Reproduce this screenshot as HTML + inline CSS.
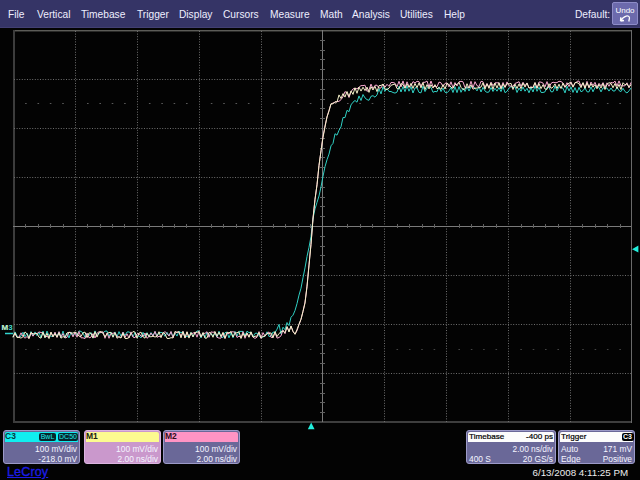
<!DOCTYPE html>
<html><head><meta charset="utf-8">
<style>
html,body{margin:0;padding:0;width:640px;height:480px;overflow:hidden;background:#030303;}
body{position:relative;font-family:"Liberation Sans",sans-serif;}
#menu{position:absolute;left:0;top:0;width:640px;height:28px;background:#353466;}
.mi{position:absolute;top:9px;font-size:10.2px;color:#eeeeff;line-height:12px;white-space:nowrap;}
#undo{position:absolute;left:612px;top:2px;width:26px;height:23px;box-sizing:border-box;background:#6c6aac;border:1px solid #8e8cc8;border-radius:2px;}
#undo .t{position:absolute;left:0;width:24px;text-align:center;top:3.5px;font-size:8px;line-height:8px;color:#fff;}
.pn{position:absolute;top:430px;height:34px;box-sizing:border-box;border-radius:3px;background:#6a6898;border:1px solid #9c9ac8;overflow:hidden;}
.hd{position:absolute;left:1px;right:1px;top:1px;height:10px;border-radius:2px 2px 0 0;}
.tx{position:absolute;font-size:8.4px;line-height:10px;color:#f4f4ff;white-space:nowrap;}
.r{right:2px;text-align:right;}
.l{left:2px;}
.r1{top:12.5px}
.r2{top:22.5px}
.h{top:1px;font-size:8.1px;-webkit-text-stroke:0.2px currentColor;}
.bd{position:absolute;top:2px;height:8px;background:#06262c;border-radius:2px;color:#20e8ea;font-size:7px;line-height:8px;text-align:center;}
</style></head><body>
<div id="menu"><div style="position:absolute;left:0;top:27px;width:640px;height:1px;background:#423f72"></div>
<div class="mi" style="left:8px">File</div>
<div class="mi" style="left:37px">Vertical</div>
<div class="mi" style="left:81px">Timebase</div>
<div class="mi" style="left:137px">Trigger</div>
<div class="mi" style="left:179px">Display</div>
<div class="mi" style="left:223px">Cursors</div>
<div class="mi" style="left:270px">Measure</div>
<div class="mi" style="left:320px">Math</div>
<div class="mi" style="left:352px">Analysis</div>
<div class="mi" style="left:400px">Utilities</div>
<div class="mi" style="left:444px">Help</div>
<div class="mi" style="left:575px">Default:</div>
<div id="undo"><div class="t">Undo</div>
<svg width="26" height="24" style="position:absolute;left:-1px;top:-1px"><path d="M8.5 19 L8.8 15.3 M8.5 19 L12 18.5 M9 18.5 C 11.5 13.5, 17.5 12.5, 17.5 16 L16.8 19.5" fill="none" stroke="#fff" stroke-width="1.3"/></svg>
</div>
</div>
<svg width="640" height="452" viewBox="0 28 640 452" style="position:absolute;left:0;top:28px">
<rect x="13" y="30" width="619" height="1" fill="#5c5c58"/>
<rect x="13" y="31" width="619" height="1" fill="#2a2a28"/>
<rect x="13" y="421" width="619" height="2" fill="#3e3e3e"/>
<rect x="13" y="30" width="2" height="393" fill="#3c3c3c"/>
<rect x="631" y="30" width="1" height="393" fill="#6a6a6a"/>
<line x1="75.5" y1="31" x2="75.5" y2="422" stroke="#6e6e6e" stroke-dasharray="1 1.6"/>
<line x1="137.5" y1="31" x2="137.5" y2="422" stroke="#6e6e6e" stroke-dasharray="1 1.6"/>
<line x1="199.5" y1="31" x2="199.5" y2="422" stroke="#6e6e6e" stroke-dasharray="1 1.6"/>
<line x1="261.5" y1="31" x2="261.5" y2="422" stroke="#6e6e6e" stroke-dasharray="1 1.6"/>
<line x1="384.5" y1="31" x2="384.5" y2="422" stroke="#6e6e6e" stroke-dasharray="1 1.6"/>
<line x1="446.5" y1="31" x2="446.5" y2="422" stroke="#6e6e6e" stroke-dasharray="1 1.6"/>
<line x1="508.5" y1="31" x2="508.5" y2="422" stroke="#6e6e6e" stroke-dasharray="1 1.6"/>
<line x1="570.5" y1="31" x2="570.5" y2="422" stroke="#6e6e6e" stroke-dasharray="1 1.6"/>
<line x1="14" y1="79.5" x2="631" y2="79.5" stroke="#6e6e6e" stroke-dasharray="1 1.6"/>
<line x1="14" y1="128.5" x2="631" y2="128.5" stroke="#6e6e6e" stroke-dasharray="1 1.6"/>
<line x1="14" y1="177.5" x2="631" y2="177.5" stroke="#6e6e6e" stroke-dasharray="1 1.6"/>
<line x1="14" y1="275.5" x2="631" y2="275.5" stroke="#6e6e6e" stroke-dasharray="1 1.6"/>
<line x1="14" y1="324.5" x2="631" y2="324.5" stroke="#6e6e6e" stroke-dasharray="1 1.6"/>
<line x1="14" y1="373.5" x2="631" y2="373.5" stroke="#6e6e6e" stroke-dasharray="1 1.6"/>
<rect x="25.1" y="103" width="1.6" height="1" fill="#5a5a5a"/>
<rect x="37.5" y="103" width="1.6" height="1" fill="#5a5a5a"/>
<rect x="49.8" y="103" width="1.6" height="1" fill="#5a5a5a"/>
<rect x="62.2" y="103" width="1.6" height="1" fill="#5a5a5a"/>
<rect x="87.0" y="103" width="1.6" height="1" fill="#5a5a5a"/>
<rect x="99.4" y="103" width="1.6" height="1" fill="#5a5a5a"/>
<rect x="111.7" y="103" width="1.6" height="1" fill="#5a5a5a"/>
<rect x="124.1" y="103" width="1.6" height="1" fill="#5a5a5a"/>
<rect x="148.9" y="103" width="1.6" height="1" fill="#5a5a5a"/>
<rect x="161.3" y="103" width="1.6" height="1" fill="#5a5a5a"/>
<rect x="173.6" y="103" width="1.6" height="1" fill="#5a5a5a"/>
<rect x="186.0" y="103" width="1.6" height="1" fill="#5a5a5a"/>
<rect x="210.8" y="103" width="1.6" height="1" fill="#5a5a5a"/>
<rect x="223.2" y="103" width="1.6" height="1" fill="#5a5a5a"/>
<rect x="235.5" y="103" width="1.6" height="1" fill="#5a5a5a"/>
<rect x="247.9" y="103" width="1.6" height="1" fill="#5a5a5a"/>
<rect x="272.7" y="103" width="1.6" height="1" fill="#5a5a5a"/>
<rect x="285.1" y="103" width="1.6" height="1" fill="#5a5a5a"/>
<rect x="297.4" y="103" width="1.6" height="1" fill="#5a5a5a"/>
<rect x="309.8" y="103" width="1.6" height="1" fill="#5a5a5a"/>
<rect x="334.6" y="103" width="1.6" height="1" fill="#5a5a5a"/>
<rect x="347.0" y="103" width="1.6" height="1" fill="#5a5a5a"/>
<rect x="359.3" y="103" width="1.6" height="1" fill="#5a5a5a"/>
<rect x="371.7" y="103" width="1.6" height="1" fill="#5a5a5a"/>
<rect x="396.5" y="103" width="1.6" height="1" fill="#5a5a5a"/>
<rect x="408.9" y="103" width="1.6" height="1" fill="#5a5a5a"/>
<rect x="421.2" y="103" width="1.6" height="1" fill="#5a5a5a"/>
<rect x="433.6" y="103" width="1.6" height="1" fill="#5a5a5a"/>
<rect x="458.4" y="103" width="1.6" height="1" fill="#5a5a5a"/>
<rect x="470.8" y="103" width="1.6" height="1" fill="#5a5a5a"/>
<rect x="483.1" y="103" width="1.6" height="1" fill="#5a5a5a"/>
<rect x="495.5" y="103" width="1.6" height="1" fill="#5a5a5a"/>
<rect x="520.3" y="103" width="1.6" height="1" fill="#5a5a5a"/>
<rect x="532.7" y="103" width="1.6" height="1" fill="#5a5a5a"/>
<rect x="545.0" y="103" width="1.6" height="1" fill="#5a5a5a"/>
<rect x="557.4" y="103" width="1.6" height="1" fill="#5a5a5a"/>
<rect x="582.2" y="103" width="1.6" height="1" fill="#5a5a5a"/>
<rect x="594.6" y="103" width="1.6" height="1" fill="#5a5a5a"/>
<rect x="606.9" y="103" width="1.6" height="1" fill="#5a5a5a"/>
<rect x="619.3" y="103" width="1.6" height="1" fill="#5a5a5a"/>
<rect x="25.1" y="349" width="1.6" height="1" fill="#444444"/>
<rect x="37.5" y="349" width="1.6" height="1" fill="#444444"/>
<rect x="49.8" y="349" width="1.6" height="1" fill="#444444"/>
<rect x="62.2" y="349" width="1.6" height="1" fill="#444444"/>
<rect x="87.0" y="349" width="1.6" height="1" fill="#444444"/>
<rect x="99.4" y="349" width="1.6" height="1" fill="#444444"/>
<rect x="111.7" y="349" width="1.6" height="1" fill="#444444"/>
<rect x="124.1" y="349" width="1.6" height="1" fill="#444444"/>
<rect x="148.9" y="349" width="1.6" height="1" fill="#444444"/>
<rect x="161.3" y="349" width="1.6" height="1" fill="#444444"/>
<rect x="173.6" y="349" width="1.6" height="1" fill="#444444"/>
<rect x="186.0" y="349" width="1.6" height="1" fill="#444444"/>
<rect x="210.8" y="349" width="1.6" height="1" fill="#444444"/>
<rect x="223.2" y="349" width="1.6" height="1" fill="#444444"/>
<rect x="235.5" y="349" width="1.6" height="1" fill="#444444"/>
<rect x="247.9" y="349" width="1.6" height="1" fill="#444444"/>
<rect x="272.7" y="349" width="1.6" height="1" fill="#444444"/>
<rect x="285.1" y="349" width="1.6" height="1" fill="#444444"/>
<rect x="297.4" y="349" width="1.6" height="1" fill="#444444"/>
<rect x="309.8" y="349" width="1.6" height="1" fill="#444444"/>
<rect x="334.6" y="349" width="1.6" height="1" fill="#444444"/>
<rect x="347.0" y="349" width="1.6" height="1" fill="#444444"/>
<rect x="359.3" y="349" width="1.6" height="1" fill="#444444"/>
<rect x="371.7" y="349" width="1.6" height="1" fill="#444444"/>
<rect x="396.5" y="349" width="1.6" height="1" fill="#444444"/>
<rect x="408.9" y="349" width="1.6" height="1" fill="#444444"/>
<rect x="421.2" y="349" width="1.6" height="1" fill="#444444"/>
<rect x="433.6" y="349" width="1.6" height="1" fill="#444444"/>
<rect x="458.4" y="349" width="1.6" height="1" fill="#444444"/>
<rect x="470.8" y="349" width="1.6" height="1" fill="#444444"/>
<rect x="483.1" y="349" width="1.6" height="1" fill="#444444"/>
<rect x="495.5" y="349" width="1.6" height="1" fill="#444444"/>
<rect x="520.3" y="349" width="1.6" height="1" fill="#444444"/>
<rect x="532.7" y="349" width="1.6" height="1" fill="#444444"/>
<rect x="545.0" y="349" width="1.6" height="1" fill="#444444"/>
<rect x="557.4" y="349" width="1.6" height="1" fill="#444444"/>
<rect x="582.2" y="349" width="1.6" height="1" fill="#444444"/>
<rect x="594.6" y="349" width="1.6" height="1" fill="#444444"/>
<rect x="606.9" y="349" width="1.6" height="1" fill="#444444"/>
<rect x="619.3" y="349" width="1.6" height="1" fill="#444444"/>
<line x1="322.5" y1="30" x2="322.5" y2="422" stroke="#7a7a7a"/>
<line x1="13" y1="226.5" x2="631" y2="226.5" stroke="#7a7a7a"/>
<line x1="320" y1="40.5" x2="325" y2="40.5" stroke="#606060"/>
<line x1="320" y1="50.5" x2="325" y2="50.5" stroke="#606060"/>
<line x1="320" y1="59.5" x2="325" y2="59.5" stroke="#606060"/>
<line x1="320" y1="69.5" x2="325" y2="69.5" stroke="#606060"/>
<line x1="320" y1="89.5" x2="325" y2="89.5" stroke="#606060"/>
<line x1="320" y1="99.5" x2="325" y2="99.5" stroke="#606060"/>
<line x1="320" y1="108.5" x2="325" y2="108.5" stroke="#606060"/>
<line x1="320" y1="118.5" x2="325" y2="118.5" stroke="#606060"/>
<line x1="320" y1="138.5" x2="325" y2="138.5" stroke="#606060"/>
<line x1="320" y1="148.5" x2="325" y2="148.5" stroke="#606060"/>
<line x1="320" y1="157.5" x2="325" y2="157.5" stroke="#606060"/>
<line x1="320" y1="167.5" x2="325" y2="167.5" stroke="#606060"/>
<line x1="320" y1="187.5" x2="325" y2="187.5" stroke="#606060"/>
<line x1="320" y1="197.5" x2="325" y2="197.5" stroke="#606060"/>
<line x1="320" y1="206.5" x2="325" y2="206.5" stroke="#606060"/>
<line x1="320" y1="216.5" x2="325" y2="216.5" stroke="#606060"/>
<line x1="320" y1="236.5" x2="325" y2="236.5" stroke="#606060"/>
<line x1="320" y1="246.5" x2="325" y2="246.5" stroke="#606060"/>
<line x1="320" y1="255.5" x2="325" y2="255.5" stroke="#606060"/>
<line x1="320" y1="265.5" x2="325" y2="265.5" stroke="#606060"/>
<line x1="320" y1="285.5" x2="325" y2="285.5" stroke="#606060"/>
<line x1="320" y1="295.5" x2="325" y2="295.5" stroke="#606060"/>
<line x1="320" y1="304.5" x2="325" y2="304.5" stroke="#606060"/>
<line x1="320" y1="314.5" x2="325" y2="314.5" stroke="#606060"/>
<line x1="320" y1="334.5" x2="325" y2="334.5" stroke="#606060"/>
<line x1="320" y1="344.5" x2="325" y2="344.5" stroke="#606060"/>
<line x1="320" y1="353.5" x2="325" y2="353.5" stroke="#606060"/>
<line x1="320" y1="363.5" x2="325" y2="363.5" stroke="#606060"/>
<line x1="320" y1="383.5" x2="325" y2="383.5" stroke="#606060"/>
<line x1="320" y1="393.5" x2="325" y2="393.5" stroke="#606060"/>
<line x1="320" y1="402.5" x2="325" y2="402.5" stroke="#606060"/>
<line x1="320" y1="412.5" x2="325" y2="412.5" stroke="#606060"/>
<line x1="25.5" y1="224" x2="25.5" y2="228" stroke="#606060"/>
<line x1="38.5" y1="224" x2="38.5" y2="228" stroke="#606060"/>
<line x1="50.5" y1="224" x2="50.5" y2="228" stroke="#606060"/>
<line x1="63.5" y1="224" x2="63.5" y2="228" stroke="#606060"/>
<line x1="87.5" y1="224" x2="87.5" y2="228" stroke="#606060"/>
<line x1="100.5" y1="224" x2="100.5" y2="228" stroke="#606060"/>
<line x1="112.5" y1="224" x2="112.5" y2="228" stroke="#606060"/>
<line x1="124.5" y1="224" x2="124.5" y2="228" stroke="#606060"/>
<line x1="149.5" y1="224" x2="149.5" y2="228" stroke="#606060"/>
<line x1="162.5" y1="224" x2="162.5" y2="228" stroke="#606060"/>
<line x1="174.5" y1="224" x2="174.5" y2="228" stroke="#606060"/>
<line x1="186.5" y1="224" x2="186.5" y2="228" stroke="#606060"/>
<line x1="211.5" y1="224" x2="211.5" y2="228" stroke="#606060"/>
<line x1="223.5" y1="224" x2="223.5" y2="228" stroke="#606060"/>
<line x1="236.5" y1="224" x2="236.5" y2="228" stroke="#606060"/>
<line x1="248.5" y1="224" x2="248.5" y2="228" stroke="#606060"/>
<line x1="273.5" y1="224" x2="273.5" y2="228" stroke="#606060"/>
<line x1="285.5" y1="224" x2="285.5" y2="228" stroke="#606060"/>
<line x1="298.5" y1="224" x2="298.5" y2="228" stroke="#606060"/>
<line x1="310.5" y1="224" x2="310.5" y2="228" stroke="#606060"/>
<line x1="335.5" y1="224" x2="335.5" y2="228" stroke="#606060"/>
<line x1="347.5" y1="224" x2="347.5" y2="228" stroke="#606060"/>
<line x1="360.5" y1="224" x2="360.5" y2="228" stroke="#606060"/>
<line x1="372.5" y1="224" x2="372.5" y2="228" stroke="#606060"/>
<line x1="397.5" y1="224" x2="397.5" y2="228" stroke="#606060"/>
<line x1="409.5" y1="224" x2="409.5" y2="228" stroke="#606060"/>
<line x1="422.5" y1="224" x2="422.5" y2="228" stroke="#606060"/>
<line x1="434.5" y1="224" x2="434.5" y2="228" stroke="#606060"/>
<line x1="459.5" y1="224" x2="459.5" y2="228" stroke="#606060"/>
<line x1="471.5" y1="224" x2="471.5" y2="228" stroke="#606060"/>
<line x1="483.5" y1="224" x2="483.5" y2="228" stroke="#606060"/>
<line x1="496.5" y1="224" x2="496.5" y2="228" stroke="#606060"/>
<line x1="521.5" y1="224" x2="521.5" y2="228" stroke="#606060"/>
<line x1="533.5" y1="224" x2="533.5" y2="228" stroke="#606060"/>
<line x1="545.5" y1="224" x2="545.5" y2="228" stroke="#606060"/>
<line x1="558.5" y1="224" x2="558.5" y2="228" stroke="#606060"/>
<line x1="582.5" y1="224" x2="582.5" y2="228" stroke="#606060"/>
<line x1="595.5" y1="224" x2="595.5" y2="228" stroke="#606060"/>
<line x1="607.5" y1="224" x2="607.5" y2="228" stroke="#606060"/>
<line x1="620.5" y1="224" x2="620.5" y2="228" stroke="#606060"/>
<polyline points="13.0,337.0 15.0,331.9 17.0,335.7 19.0,337.7 21.0,336.2 23.0,332.2 25.0,336.8 27.0,333.0 29.0,337.8 31.0,331.6 33.0,335.7 35.0,331.9 37.0,335.7 39.0,332.2 41.0,337.8 43.0,331.1 45.0,337.6 47.0,331.1 49.0,335.8 51.0,336.1 53.0,336.7 55.0,332.7 57.0,336.6 59.0,331.9 61.0,337.9 63.0,331.1 65.0,338.1 67.0,333.0 69.0,338.0 71.0,332.0 73.0,336.1 75.0,332.0 77.0,335.7 79.0,330.9 81.0,331.4 83.0,333.0 85.0,337.5 87.0,333.3 89.0,335.7 91.0,332.6 93.0,338.1 95.0,330.9 97.0,335.8 99.0,333.3 101.0,332.4 103.0,333.0 105.0,331.2 107.0,331.0 109.0,336.5 111.0,332.1 113.0,337.1 115.0,331.9 117.0,336.9 119.0,331.6 121.0,336.3 123.0,332.1 125.0,335.6 127.0,332.0 129.0,331.9 131.0,333.3 133.0,336.8 135.0,332.5 137.0,337.4 139.0,335.7 141.0,338.0 143.0,332.3 145.0,336.4 147.0,332.6 149.0,337.1 151.0,332.5 153.0,335.6 155.0,331.6 157.0,336.1 159.0,332.8 161.0,332.3 163.0,333.2 165.0,336.4 167.0,332.3 169.0,336.0 171.0,331.8 173.0,336.7 175.0,333.1 177.0,336.1 179.0,331.3 181.0,332.7 183.0,331.8 185.0,336.5 187.0,336.3 189.0,336.3 191.0,332.4 193.0,336.6 195.0,333.0 197.0,331.0 199.0,330.9 201.0,338.0 203.0,332.9 205.0,337.7 207.0,332.1 209.0,336.4 211.0,333.2 213.0,336.3 215.0,333.3 217.0,337.3 219.0,331.2 221.0,337.0 223.0,337.5 225.0,332.7 227.0,332.1 229.0,337.9 231.0,332.6 233.0,337.8 235.0,331.4 237.0,336.1 239.0,331.4 241.0,331.4 243.0,331.4 245.0,335.6 247.0,331.2 249.0,332.7 251.0,332.1 253.0,336.8 255.0,333.4 257.0,333.1 259.0,335.8 261.0,337.7 263.0,336.8 265.0,336.4 267.0,331.8 269.0,336.5 271.0,336.4 273.0,332.0 275.0,332.5 277.0,329.2 279.0,324.4 281.0,334.0 283.0,327.2 285.0,329.7 287.0,322.5 289.0,325.6 291.0,317.2 293.0,315.2 295.0,310.5 297.0,303.6 299.0,295.1 301.0,288.2 303.0,277.7 305.0,267.9 307.0,256.5 309.0,247.3 311.0,236.4 313.0,218.5 315.0,208.9 317.0,202.4 319.0,196.0 321.0,186.9 323.0,176.3 325.0,166.7 327.0,159.7 329.0,154.1 331.0,145.8 333.0,143.4 335.0,133.7 337.0,135.2 339.0,130.3 341.0,126.8 343.0,117.5 345.0,117.6 347.0,110.3 349.0,111.7 351.0,104.9 353.0,102.2 355.0,100.5 357.0,102.2 359.0,95.9 361.0,100.5 363.0,94.5 365.0,97.9 367.0,99.6 369.0,100.3 371.0,96.3 373.0,95.7 375.0,97.2 377.0,94.9 379.0,88.7 381.0,93.9 383.0,86.8 385.0,91.3 387.0,88.4 389.0,91.5 391.0,91.5 393.0,92.5 395.0,93.1 397.0,92.1 399.0,86.3 401.0,92.0 403.0,86.6 405.0,91.6 407.0,86.0 409.0,91.2 411.0,86.6 413.0,93.0 415.0,87.8 417.0,87.8 419.0,92.4 421.0,92.8 423.0,86.2 425.0,91.6 427.0,88.2 429.0,86.3 431.0,87.5 433.0,92.3 435.0,91.4 437.0,91.8 439.0,86.9 441.0,91.6 443.0,88.1 445.0,92.3 447.0,92.8 449.0,90.8 451.0,87.5 453.0,92.5 455.0,86.7 457.0,92.6 459.0,86.5 461.0,92.3 463.0,88.1 465.0,91.5 467.0,86.7 469.0,91.0 471.0,86.8 473.0,86.2 475.0,88.1 477.0,90.9 479.0,86.6 481.0,92.0 483.0,87.3 485.0,91.0 487.0,92.4 489.0,91.9 491.0,87.5 493.0,91.5 495.0,88.3 497.0,91.2 499.0,87.5 501.0,91.6 503.0,86.5 505.0,92.7 507.0,91.3 509.0,88.1 511.0,86.6 513.0,87.9 515.0,86.5 517.0,92.5 519.0,88.1 521.0,91.1 523.0,87.0 525.0,91.2 527.0,88.3 529.0,92.8 531.0,87.5 533.0,92.0 535.0,86.0 537.0,91.3 539.0,87.2 541.0,92.4 543.0,92.5 545.0,91.8 547.0,87.3 549.0,87.1 551.0,91.8 553.0,91.7 555.0,86.0 557.0,90.9 559.0,86.8 561.0,87.5 563.0,88.2 565.0,92.9 567.0,86.2 569.0,90.9 571.0,86.9 573.0,92.4 575.0,87.6 577.0,92.9 579.0,87.3 581.0,91.8 583.0,90.7 585.0,87.9 587.0,91.8 589.0,91.9 591.0,86.8 593.0,91.8 595.0,87.4 597.0,86.2 599.0,87.5 601.0,91.9 603.0,87.9 605.0,87.9 607.0,88.1 609.0,91.1 611.0,88.0 613.0,91.0 615.0,90.9 617.0,87.2 619.0,90.6 621.0,91.6 623.0,88.3 625.0,91.6 627.0,93.0 629.0,90.8 631.0,88.0" fill="none" stroke="#30d0c4" stroke-width="1" stroke-linejoin="round"/>
<polyline points="13.0,336.5 15.0,333.7 17.0,337.0 19.0,337.4 21.0,332.8 23.0,336.3 25.0,338.2 27.0,336.6 29.0,338.5 31.0,332.9 33.0,336.2 35.0,333.2 37.0,333.6 39.0,331.9 41.0,332.5 43.0,333.0 45.0,336.2 47.0,336.6 49.0,337.2 51.0,332.4 53.0,336.8 55.0,332.2 57.0,337.5 59.0,331.7 61.0,336.8 63.0,333.6 65.0,338.0 67.0,337.3 69.0,332.2 71.0,332.5 73.0,336.9 75.0,332.4 77.0,337.2 79.0,331.5 81.0,337.8 83.0,337.8 85.0,338.6 87.0,333.2 89.0,337.8 91.0,337.2 93.0,333.6 95.0,338.0 97.0,333.3 99.0,331.7 101.0,332.8 103.0,331.7 105.0,338.3 107.0,332.9 109.0,338.3 111.0,333.5 113.0,333.3 115.0,332.7 117.0,336.7 119.0,337.1 121.0,337.5 123.0,332.2 125.0,337.6 127.0,333.8 129.0,338.0 131.0,331.9 133.0,337.1 135.0,337.7 137.0,333.8 139.0,333.5 141.0,336.2 143.0,336.5 145.0,333.0 147.0,338.3 149.0,336.5 151.0,333.0 153.0,336.4 155.0,331.4 157.0,337.3 159.0,336.3 161.0,336.7 163.0,333.5 165.0,331.5 167.0,333.6 169.0,336.1 171.0,331.5 173.0,337.8 175.0,333.0 177.0,332.0 179.0,332.0 181.0,336.6 183.0,331.4 185.0,338.1 187.0,332.1 189.0,337.4 191.0,333.8 193.0,333.2 195.0,332.2 197.0,337.2 199.0,331.4 201.0,337.0 203.0,333.3 205.0,333.4 207.0,331.7 209.0,337.3 211.0,331.9 213.0,332.3 215.0,331.9 217.0,337.3 219.0,338.1 221.0,338.1 223.0,332.9 225.0,338.5 227.0,333.5 229.0,333.5 231.0,331.9 233.0,331.8 235.0,332.3 237.0,337.5 239.0,336.1 241.0,337.7 243.0,331.6 245.0,338.3 247.0,333.4 249.0,336.8 251.0,332.4 253.0,337.1 255.0,338.4 257.0,337.2 259.0,331.6 261.0,338.4 263.0,332.6 265.0,336.1 267.0,333.5 269.0,331.9 271.0,337.3 273.0,337.5 275.0,332.6 277.0,338.1 279.0,337.5 281.0,335.9 283.0,330.1 285.0,333.7 287.0,326.8 289.0,331.4 291.0,326.2 293.0,331.6 295.0,334.1 297.0,330.8 299.0,324.6 301.0,319.4 303.0,311.6 305.0,302.1 307.0,286.9 309.0,264.3 311.0,244.2 313.0,217.7 315.0,199.6 317.0,184.9 319.0,165.3 321.0,150.9 323.0,136.2 325.0,125.8 327.0,116.8 329.0,110.3 331.0,104.1 333.0,103.0 335.0,102.2 337.0,101.6 339.0,101.3 341.0,99.7 343.0,96.7 345.0,91.6 347.0,93.0 349.0,97.5 351.0,91.7 353.0,88.9 355.0,88.3 357.0,88.8 359.0,87.2 361.0,85.6 363.0,85.6 365.0,85.2 367.0,91.4 369.0,89.8 371.0,84.1 373.0,88.7 375.0,85.3 377.0,85.2 379.0,88.0 381.0,88.0 383.0,84.1 385.0,87.2 387.0,84.3 389.0,86.3 391.0,82.5 393.0,82.5 395.0,83.2 397.0,86.7 399.0,81.3 401.0,86.9 403.0,80.9 405.0,87.7 407.0,81.8 409.0,86.5 411.0,85.9 413.0,81.6 415.0,83.0 417.0,81.3 419.0,81.7 421.0,86.2 423.0,82.3 425.0,82.3 427.0,81.0 429.0,87.0 431.0,81.0 433.0,86.5 435.0,86.5 437.0,86.8 439.0,82.1 441.0,82.8 443.0,86.6 445.0,83.4 447.0,82.8 449.0,86.9 451.0,81.8 453.0,87.8 455.0,82.6 457.0,86.0 459.0,81.8 461.0,81.3 463.0,81.8 465.0,87.6 467.0,86.9 469.0,87.7 471.0,81.3 473.0,87.8 475.0,81.7 477.0,85.7 479.0,86.5 481.0,81.3 483.0,81.8 485.0,87.3 487.0,83.4 489.0,87.5 491.0,82.1 493.0,85.7 495.0,82.8 497.0,82.8 499.0,82.9 501.0,88.0 503.0,82.5 505.0,87.3 507.0,81.9 509.0,85.8 511.0,86.2 513.0,86.3 515.0,83.4 517.0,82.7 519.0,81.7 521.0,86.3 523.0,82.2 525.0,85.9 527.0,82.9 529.0,87.9 531.0,86.7 533.0,88.0 535.0,82.7 537.0,88.0 539.0,82.0 541.0,82.1 543.0,83.1 545.0,86.9 547.0,81.6 549.0,87.8 551.0,83.4 553.0,82.2 555.0,82.7 557.0,82.6 559.0,81.3 561.0,81.5 563.0,83.1 565.0,87.4 567.0,82.7 569.0,86.6 571.0,81.9 573.0,86.7 575.0,83.3 577.0,81.3 579.0,81.1 581.0,86.2 583.0,82.9 585.0,88.0 587.0,81.4 589.0,87.9 591.0,82.0 593.0,85.7 595.0,82.3 597.0,87.2 599.0,83.3 601.0,85.9 603.0,82.6 605.0,87.4 607.0,82.8 609.0,86.3 611.0,82.4 613.0,83.0 615.0,81.1 617.0,86.1 619.0,80.9 621.0,85.9 623.0,85.8 625.0,85.8 627.0,82.8 629.0,87.8 631.0,82.4" fill="none" stroke="#f8a8d0" stroke-width="1" stroke-linejoin="round"/>
<polyline points="13.0,337.5 15.0,332.7 17.0,337.6 19.0,337.4 21.0,338.1 23.0,336.8 25.0,331.9 27.0,333.8 29.0,338.5 31.0,332.4 33.0,333.9 35.0,333.8 37.0,333.3 39.0,337.2 41.0,338.2 43.0,332.3 45.0,337.7 47.0,333.2 49.0,338.6 51.0,332.1 53.0,336.7 55.0,333.7 57.0,337.1 59.0,332.9 61.0,338.2 63.0,336.6 65.0,337.3 67.0,332.9 69.0,332.3 71.0,333.2 73.0,333.1 75.0,332.0 77.0,333.3 79.0,336.2 81.0,336.5 83.0,332.8 85.0,332.1 87.0,337.7 89.0,332.9 91.0,333.2 93.0,338.1 95.0,331.7 97.0,337.1 99.0,332.3 101.0,331.4 103.0,333.3 105.0,336.9 107.0,333.7 109.0,332.5 111.0,332.4 113.0,337.2 115.0,332.7 117.0,338.3 119.0,336.5 121.0,338.1 123.0,333.4 125.0,338.4 127.0,338.5 129.0,337.6 131.0,333.7 133.0,331.5 135.0,332.1 137.0,338.2 139.0,333.2 141.0,332.1 143.0,336.7 145.0,338.2 147.0,333.2 149.0,336.6 151.0,336.8 153.0,336.2 155.0,337.0 157.0,336.4 159.0,331.7 161.0,337.7 163.0,332.4 165.0,333.8 167.0,338.4 169.0,338.5 171.0,337.7 173.0,337.9 175.0,331.4 177.0,332.5 179.0,331.7 181.0,337.9 183.0,331.6 185.0,337.8 187.0,331.7 189.0,338.1 191.0,332.5 193.0,337.0 195.0,332.4 197.0,332.3 199.0,331.7 201.0,337.1 203.0,332.5 205.0,338.2 207.0,338.0 209.0,332.4 211.0,333.3 213.0,337.3 215.0,331.6 217.0,336.1 219.0,332.2 221.0,336.5 223.0,332.3 225.0,338.3 227.0,332.2 229.0,332.8 231.0,331.6 233.0,337.0 235.0,333.1 237.0,332.7 239.0,331.8 241.0,338.5 243.0,333.5 245.0,336.8 247.0,332.9 249.0,337.3 251.0,331.8 253.0,337.2 255.0,336.2 257.0,336.2 259.0,332.5 261.0,338.1 263.0,336.4 265.0,336.1 267.0,333.3 269.0,333.8 271.0,332.8 273.0,337.7 275.0,331.5 277.0,336.6 279.0,333.5 281.0,331.9 283.0,330.9 285.0,332.7 287.0,326.6 289.0,332.0 291.0,325.9 293.0,331.3 295.0,334.3 297.0,329.4 299.0,324.2 301.0,319.1 303.0,311.2 305.0,303.2 307.0,286.1 309.0,265.8 311.0,244.3 313.0,219.2 315.0,199.1 317.0,184.8 319.0,165.4 321.0,150.8 323.0,137.5 325.0,127.1 327.0,117.0 329.0,111.1 331.0,103.7 333.0,103.9 335.0,101.7 337.0,102.1 339.0,94.9 341.0,98.5 343.0,93.6 345.0,97.1 347.0,91.5 349.0,96.5 351.0,90.9 353.0,94.4 355.0,87.8 357.0,93.3 359.0,87.1 361.0,91.1 363.0,87.2 365.0,90.6 367.0,87.1 369.0,92.4 371.0,86.7 373.0,90.0 375.0,86.3 377.0,91.6 379.0,85.6 381.0,85.5 383.0,84.1 385.0,89.1 387.0,89.6 389.0,88.1 391.0,85.3 393.0,84.6 395.0,84.1 397.0,88.6 399.0,88.9 401.0,83.6 403.0,84.4 405.0,88.2 407.0,83.9 409.0,87.5 411.0,83.3 413.0,88.4 415.0,83.4 417.0,87.7 419.0,82.9 421.0,87.9 423.0,82.6 425.0,89.6 427.0,84.6 429.0,88.9 431.0,84.7 433.0,88.1 435.0,84.6 437.0,88.8 439.0,87.6 441.0,89.4 443.0,84.6 445.0,89.0 447.0,83.2 449.0,84.7 451.0,87.2 453.0,88.4 455.0,84.6 457.0,84.4 459.0,82.4 461.0,87.3 463.0,89.5 465.0,89.0 467.0,83.7 469.0,88.2 471.0,84.9 473.0,89.2 475.0,88.2 477.0,88.1 479.0,87.5 481.0,87.1 483.0,82.9 485.0,89.2 487.0,83.9 489.0,88.4 491.0,82.9 493.0,89.4 495.0,83.0 497.0,88.1 499.0,82.7 501.0,89.0 503.0,83.9 505.0,87.3 507.0,83.7 509.0,84.0 511.0,83.3 513.0,89.5 515.0,84.1 517.0,88.5 519.0,83.9 521.0,88.7 523.0,83.0 525.0,87.1 527.0,83.1 529.0,88.1 531.0,87.6 533.0,87.3 535.0,82.6 537.0,88.4 539.0,83.5 541.0,88.7 543.0,84.7 545.0,89.0 547.0,89.4 549.0,83.7 551.0,88.3 553.0,87.2 555.0,83.9 557.0,88.6 559.0,84.2 561.0,88.5 563.0,83.1 565.0,87.1 567.0,84.8 569.0,83.0 571.0,82.7 573.0,87.2 575.0,82.5 577.0,82.6 579.0,83.7 581.0,87.7 583.0,82.6 585.0,88.3 587.0,82.9 589.0,87.4 591.0,83.8 593.0,87.2 595.0,84.6 597.0,88.8 599.0,84.3 601.0,88.1 603.0,83.6 605.0,89.5 607.0,84.3 609.0,82.7 611.0,83.3 613.0,87.8 615.0,83.5 617.0,88.7 619.0,84.4 621.0,89.5 623.0,82.7 625.0,84.8 627.0,83.8 629.0,87.3 631.0,84.7" fill="none" stroke="#f4f0c8" stroke-width="1" stroke-linejoin="round"/>
<line x1="5" y1="333.5" x2="13" y2="333.5" stroke="#33d6d0" stroke-width="1.5"/>
<text x="1.6" y="330" font-family="Liberation Sans, sans-serif" font-size="8" fill="#40d8d0" font-weight="bold">M3</text>
<text x="1.6" y="330" font-family="Liberation Sans, sans-serif" font-size="8" fill="#f0f0c0" font-weight="bold" opacity="0.75">M</text>
<polygon points="307.8,429.2 314.6,429.2 311.2,422.6" fill="#22eedc"/>
<polygon points="632,249.2 638.4,245.6 638.4,252.6" fill="#22eedc"/>
</svg>
<!-- panels -->
<div class="pn" style="left:3px;width:77px;">
  <div class="hd" style="background:#10eef0;"></div>
  <div class="tx h" style="left:1px;top:0;color:#063a40;font-weight:bold;font-size:8.5px;-webkit-text-stroke:0">C3</div>
  <div class="bd" style="left:35px;width:17px;">BwL</div>
  <div class="bd" style="left:54px;width:20px;">DC50</div>
  <div class="tx r r1">100 mV/div</div>
  <div class="tx r r2">-218.0 mV</div>
</div>
<div class="pn" style="left:84px;width:77px;background:#ca98cc;border-color:#dcb4e0">
  <div class="hd" style="background:#fcfa90;"></div>
  <div class="tx h" style="left:1px;top:0;color:#202010;font-weight:bold;font-size:8.5px;-webkit-text-stroke:0">M1</div>
  <div class="tx r r1">100 mV/div</div>
  <div class="tx r r2">2.00 ns/div</div>
</div>
<div class="pn" style="left:163px;width:77px;">
  <div class="hd" style="background:#ff94c4;"></div>
  <div class="tx h" style="left:1px;top:0;color:#301020;font-weight:bold;font-size:8.5px;-webkit-text-stroke:0">M2</div>
  <div class="tx r r1">100 mV/div</div>
  <div class="tx r r2">2.00 ns/div</div>
</div>
<div class="pn" style="left:466px;width:90px;">
  <div class="hd" style="background:#fcfcfc;"></div>
  <div class="tx h" style="left:2px;color:#000">Timebase</div>
  <div class="tx h r" style="color:#000">-400 ps</div>
  <div class="tx r r1">2.00 ns/div</div>
  <div class="tx l r2">400 S</div>
  <div class="tx r r2">20 GS/s</div>
</div>
<div class="pn" style="left:558px;width:77px;">
  <div class="hd" style="background:#fcfcfc;"></div>
  <div class="tx h" style="left:2px;color:#000">Trigger</div>
  <div class="bd" style="right:0.5px;width:12px;background:#000;color:#fff;font-weight:bold;">C3</div>
  <div class="tx l r1">Auto</div>
  <div class="tx r r1">171 mV</div>
  <div class="tx l r2">Edge</div>
  <div class="tx r r2">Positive</div>
</div>
<div style="position:absolute;left:7px;top:466px;font-size:12.6px;line-height:13px;color:#1c1ce6;text-decoration:underline;-webkit-text-stroke:0.3px #1c1ce6;letter-spacing:0.1px;">LeCroy</div>
<div style="position:absolute;left:532.5px;top:467px;font-size:9.8px;line-height:11px;color:#ececec;">6/13/2008 4:11:25 PM</div>
</body></html>
